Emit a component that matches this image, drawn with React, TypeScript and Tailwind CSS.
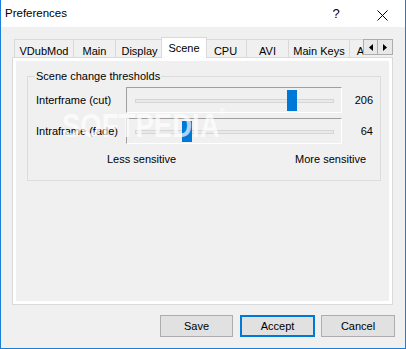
import React from "react";

const tabs: { label: string; w: number; ml: number; selected?: boolean }[] = [
  { label: "VDubMod", w: 60, ml: 0 },
  { label: "Main", w: 43, ml: -1 },
  { label: "Display", w: 49, ml: -1 },
  { label: "Scene", w: 46, ml: -3, selected: true },
  { label: "CPU", w: 43, ml: -3 },
  { label: "AVI", w: 43, ml: -1 },
  { label: "Main Keys", w: 62, ml: -1 },
  { label: "AVI Keys", w: 60, ml: -1 },
];

function Slider({ value }: { value: number }) {
  const center = 140 + (value / 255) * 188;
  const left = Math.round(center - 5 - 127);
  return (
    <div className="relative w-[216px] h-[26px] border-t border-l border-[#a0a0a0] border-b border-r border-b-white border-r-white">
      <div className="absolute left-[8px] top-[11px] w-[199px] h-[4px] border border-[#d6d6d6] bg-[#e7eaea]" />
      <div
        className="absolute top-[2px] w-[10px] h-[21px] bg-[#0078d7]"
        style={{ left }}
      />
    </div>
  );
}

export default function App() {
  return (
    <div className="relative w-[406px] h-[349px] bg-[#f0f0f0] border-x border-b border-[#1a7fd9] flex flex-col font-['Liberation_Sans',Arial,sans-serif] text-[11px] text-black overflow-hidden">
      {/* Title bar */}
      <div className="h-[27px] bg-white flex items-center shrink-0">
        <span className="pl-[4px] text-[11.5px]">Preferences</span>
        <div className="ml-auto w-[46px] h-full flex items-center justify-center text-[13px] pt-[1px]">
          ?
        </div>
        <div className="w-[46px] h-full flex items-center justify-center pt-[3px]">
          <svg width="11" height="11" viewBox="0 0 11 11">
            <path d="M0.5 0.5 L10.5 10.5 M10.5 0.5 L0.5 10.5" stroke="#000" strokeWidth="1" fill="none" />
          </svg>
        </div>
      </div>

      {/* Tab row */}
      <div className="relative z-10 mt-[10px] ml-[13px] -mb-px flex h-[21px] shrink-0">
        <div className="w-[349px] h-full flex items-end overflow-hidden">
          {tabs.map((t) =>
            t.selected ? (
              <div
                key={t.label}
                className="relative z-10 shrink-0 h-[21px] bg-white border-x border-t border-[#d9d9d9] flex justify-center pt-[2px]"
                style={{ width: t.w, marginLeft: t.ml }}
              >
                {t.label}
              </div>
            ) : (
              <div
                key={t.label}
                className="shrink-0 h-[18px] mb-px bg-[#f0f0f0] border-x border-t border-[#d9d9d9] flex justify-center pt-[3px] whitespace-nowrap"
                style={{ width: t.w, marginLeft: t.ml }}
              >
                {t.label}
              </div>
            )
          )}
        </div>
        <div className="flex self-start mt-[2px]">
          <div className="w-[15px] h-[16px] border border-[#adadad] bg-[#e8e8e8] flex items-center justify-center">
            <svg width="4" height="7" viewBox="0 0 4 7">
              <path d="M4 0 L0 3.5 L4 7 Z" fill="#000" />
            </svg>
          </div>
          <div className="-ml-px w-[16px] h-[16px] border border-[#adadad] bg-[#e8e8e8] flex items-center justify-center">
            <svg width="4" height="7" viewBox="0 0 4 7">
              <path d="M0 0 L4 3.5 L0 7 Z" fill="#000" />
            </svg>
          </div>
        </div>
      </div>

      {/* Tab panel */}
      <div className="ml-[11px] w-[381px] h-[248px] shrink-0 border border-[#d9d9d9] bg-white p-[3px]">
        <div className="h-full bg-[#f0f0f0] pt-[15px] pl-[11px]">
          <div className="relative w-[354px] h-[105px] border border-[#dcdcdc] pt-[10px] pl-[8px] pr-[7px]">
            <span className="absolute left-[7px] -top-[8px] px-[1px] bg-[#f0f0f0] leading-[14px]">
              Scene change thresholds
            </span>
            <div className="flex items-center h-[26px]">
              <span className="w-[90px]">Interframe (cut)</span>
              <Slider value={206} />
              <span className="w-[31px] text-right">206</span>
            </div>
            <div className="flex items-center h-[26px] mt-[5px]">
              <span className="w-[90px]">Intraframe (fade)</span>
              <Slider value={64} />
              <span className="w-[31px] text-right">64</span>
            </div>
            <div className="flex mt-[9px] leading-[13px] pr-[7px]">
              <span className="ml-[71px]">Less sensitive</span>
              <span className="ml-auto">More sensitive</span>
            </div>
          </div>
        </div>
      </div>

      {/* Buttons */}
      <div className="flex mt-[10px] ml-[159px] shrink-0">
        <button className="w-[73px] h-[22px] border border-[#adadad] bg-[#e1e1e1] flex items-center justify-center">
          Save
        </button>
        <button className="ml-[7px] w-[75px] h-[22px] border-2 border-[#0078d7] bg-[#e1e1e1] flex items-center justify-center">
          Accept
        </button>
        <button className="ml-[6px] w-[74px] h-[22px] border border-[#adadad] bg-[#e1e1e1] flex items-center justify-center">
          Cancel
        </button>
      </div>

      {/* Watermark */}
      <div className="pointer-events-none absolute left-[61px] top-[108px] origin-left scale-x-[0.81] text-[34px] leading-none font-bold text-white/70 whitespace-nowrap">
        SOFTPEDIA
        <span className="text-[9px] align-top">®</span>
      </div>
    </div>
  );
}
